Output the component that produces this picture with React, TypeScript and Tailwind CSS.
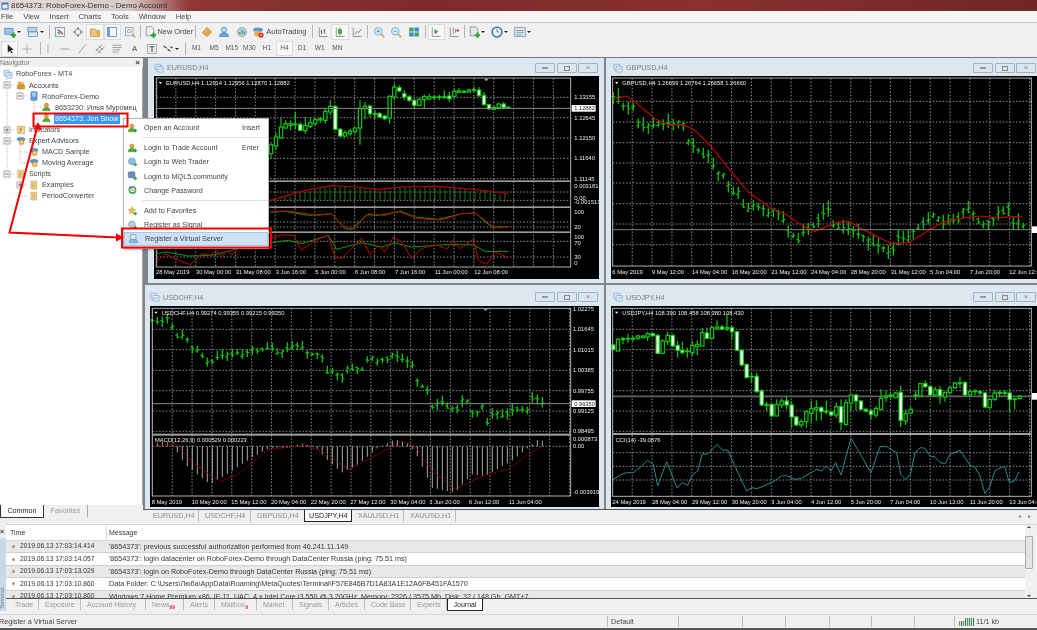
import React from "react";

type P = [number, number];

function rng(seed: number) {
  let s = seed;
  return () => {
    s = (s * 16807) % 2147483647;
    return (s % 10000) / 10000;
  };
}
function interp(pts: P[], x: number) {
  if (x <= pts[0][0]) return pts[0][1];
  for (let i = 1; i < pts.length; i++) {
    if (x <= pts[i][0]) {
      const [a, b] = pts[i - 1];
      const [c, d] = pts[i];
      return b + ((d - b) * (x - a)) / (c - a);
    }
  }
  return pts[pts.length - 1][1];
}
const poly = (pts: P[]) => pts.map((p) => p.join(",")).join(" ");

function Grid({ x0, x1, y0, y1, vx, hy }: { x0: number; x1: number; y0: number; y1: number; vx: number; hy: number[] }) {
  const vs: number[] = [];
  for (let x = vx; x < x1; x += 59.6) vs.push(x);
  return (
    <g stroke="#a4a4a4" strokeWidth={2.4} strokeDasharray="5 5">
      {vs.map((x) => (
        <line key={x} x1={x} x2={x} y1={y0} y2={y1} />
      ))}
      {hy.map((y) => (
        <line key={y} x1={x0} x2={x1} y1={y} y2={y} />
      ))}
    </g>
  );
}
function Frame({ x0, x1, y0, y1 }: { x0: number; x1: number; y0: number; y1: number }) {
  return <rect x={x0} y={y0} width={x1 - x0} height={y1 - y0} fill="none" stroke="#b0b0b0" strokeWidth={3} />;
}
function T({ x, y, t, fill = "#ececec" }: { x: number; y: number; t: string; fill?: string }) {
  return (
    <text x={x} y={y} fontSize={17.4} fill={fill}>
      {t}
    </text>
  );
}
function Dates({ y, items }: { y: number; items: [number, string][] }) {
  return (
    <>
      {items.map(([x, t]) => (
        <T key={x} x={x} y={y} t={t} />
      ))}
    </>
  );
}
function Axis({ x, items }: { x: number; items: [number, string][] }) {
  return (
    <>
      {items.map(([y, t]) => (
        <T key={y + t} x={x} y={y + 6} t={t} />
      ))}
    </>
  );
}
function Cur({ x, y, t, w = 72 }: { x: number; y: number; t?: string; w?: number }) {
  return (
    <g>
      <rect x={x} y={y - 10} width={w} height={20} fill="#ffffff" />
      {t && (
        <text x={x + 8} y={y + 6} fontSize={17} fill="#222">
          {t}
        </text>
      )}
    </g>
  );
}
function Tri({ x, y }: { x: number; y: number }) {
  return <polygon points={`${x},${y} ${x + 10},${y} ${x + 5},${y + 6}`} fill="#ffffff" />;
}
type Cd = [number, number, number, number, number, number];
function Candles({ data }: { data: Cd[] }) {
  return (
    <g strokeWidth={3.4} stroke="#10d010">
      {data.map(([x, t, b, h, l, w]) => (
        <g key={x}>
          <line x1={x} x2={x} y1={h} y2={l} />
          <rect x={x - 5} y={t} width={10} height={Math.max(b - t, 2)} fill={w ? "#ffffff" : "#000000"} />
        </g>
      ))}
    </g>
  );
}
function Bars({ pts, x0, x1, seed, size }: { pts: P[]; x0: number; x1: number; seed: number; size: number }) {
  const r = rng(seed);
  const out: React.ReactNode[] = [];
  for (let x = x0; x <= x1; x += 15) {
    const c = interp(pts, x);
    const up = size * (0.3 + r());
    const dn = size * (0.3 + r());
    const o = c + (r() - 0.5) * size * 0.7;
    const cl = c + (r() - 0.5) * size * 0.7;
    out.push(
      <g key={x}>
        <line x1={x} x2={x} y1={c - up} y2={c + dn} />
        <line x1={x - 6} x2={x} y1={o} y2={o} />
        <line x1={x} x2={x + 6} y1={cl} y2={cl} />
      </g>
    );
  }
  return (
    <g stroke="#10b810" strokeWidth={4}>
      {out}
    </g>
  );
}
function Line({ pts, c, w = 3, dash }: { pts: P[]; c: string; w?: number; dash?: string }) {
  return <polyline points={poly(pts)} fill="none" stroke={c} strokeWidth={w} strokeDasharray={dash} strokeLinejoin="round" />;
}

const eurC: Cd[] = [
  [378,258,285,250,298,0],[393,235,262,222,275,0],[408,205,238,178,240,0],[422,195,208,185,210,0],[437,195,200,185,215,0],[451,196,198,160,212,0],[466,197,215,190,218,1],[481,200,216,175,225,0],[496,192,203,175,208,0],[511,183,195,178,198,0],[526,180,184,175,192,0],[541,158,185,150,195,0],[556,143,160,125,170,0],[571,143,212,140,215,1],[586,212,232,208,235,1],[600,222,232,215,235,0],[615,217,225,210,232,0],[630,208,218,205,225,0],[645,150,208,125,258,0],[660,143,150,130,180,0],[675,142,165,138,175,1],[690,165,167,155,180,0],[704,165,175,160,178,1],[719,172,180,168,185,1],[734,113,178,110,195,0],[748,85,115,75,125,0],[763,87,97,80,100,1],[778,105,115,95,125,1],[793,114,125,108,130,1],[808,125,140,120,150,1],[823,122,140,118,142,0],[838,113,123,108,148,0],[853,114,121,105,125,0],[868,115,117,110,125,0],[883,114,116,108,125,0],[898,114,117,95,120,0],[913,112,120,100,130,1],[928,98,113,92,116,0],[942,96,101,88,104,0],[957,98,101,94,104,0],[972,94,100,90,102,0],[987,93,94,85,100,0],[1002,94,110,85,115,1],[1017,110,138,100,140,1],[1032,138,150,135,155,1],[1047,146,152,142,155,0],[1061,136,147,132,153,0],[1076,136,146,130,152,1],[1090,146,148,142,150,0],
];
const jpyC: Cd[] = [
  [25,182,196,178,198,1],[39,165,200,160,200,0],[54,163,166,158,180,0],[69,162,164,148,175,0],[84,162,164,155,172,0],[99,155,162,152,166,0],[114,155,160,153,162,0],[128,148,158,142,170,0],[143,148,154,146,158,1],[158,153,207,150,208,1],[173,170,207,165,210,0],[188,153,172,142,182,0],[203,153,185,150,188,1],[218,183,198,170,220,1],[232,198,205,172,210,1],[247,200,202,190,220,0],[262,183,205,170,215,0],[277,180,187,168,213,0],[292,145,185,130,186,0],[306,146,162,130,165,1],[321,130,162,125,165,0],[336,128,134,108,138,0],[351,128,134,122,138,1],[366,130,134,90,140,0],[381,130,142,125,165,1],[396,142,198,140,200,1],[410,198,242,195,245,1],[425,240,280,238,282,1],[440,276,278,265,295,0],[455,276,322,265,325,1],[470,320,362,315,365,1],[485,360,363,352,380,0],[500,360,395,358,397,1],[515,360,395,345,395,0],[530,350,362,342,372,0],[545,350,362,335,375,1],[560,362,398,350,430,1],[574,398,422,395,425,1],[589,412,422,405,430,0],[604,382,412,378,430,0],[619,373,387,350,415,0],[634,370,376,348,410,0],[649,370,382,365,408,1],[664,380,383,350,390,0],[679,383,392,380,396,1],[694,367,392,355,400,0],[708,367,414,345,438,1],[723,355,420,345,425,0],[738,332,356,328,380,0],[753,332,350,330,378,1],[768,350,375,348,378,1],[783,375,380,372,385,1],[798,380,390,375,405,1],[813,373,392,365,400,0],[828,342,375,315,378,0],[843,335,340,318,352,0],[857,332,335,325,345,0],[872,326,340,322,342,0],[887,324,408,305,428,1],[902,388,410,375,422,0],[917,375,386,368,388,0],[932,332,333,320,348,0],[946,298,335,296,336,0],[961,298,307,288,312,1],[976,307,332,303,335,1],[991,316,332,308,336,0],[1005,316,334,305,358,1],[1020,325,338,320,352,0],[1035,310,325,306,330,0],[1050,296,310,292,314,0],[1065,295,297,278,312,0],[1080,295,332,290,335,1],[1095,322,332,318,338,0],[1110,320,322,314,334,0],[1125,322,326,318,332,1],[1140,326,368,322,372,1],[1154,345,370,342,372,0],[1169,326,345,318,350,0],[1184,324,327,320,338,0],[1199,324,327,318,334,0],[1214,326,346,320,385,1],[1229,343,345,340,375,0],[1244,336,343,332,346,0],
];

function Eur() {
  const hist: number[] = [];
  for (let x = 375; x <= 1090; x += 15) hist.push(x);
  const ma: P[] = [[375,425],[430,410],[480,395],[560,381],[630,385],[700,392],[770,385],[870,383],[960,390],[1030,397],[1090,405]];
  const r = rng(91);
  return (
    <svg width={445} height={203.4} viewBox="27 52 1335 610" className="block shrink-0 bg-black">
      <Grid x0={35} x1={1277} y0={58} y1={625} vx={33} hy={[116,177,238,299,360,400,425,490,505,548,595]} />
      <Candles data={eurC} />
      <g stroke="#0e7d0e" strokeWidth={3}>
        {hist.map((x) => (
          <line key={x} x1={x} x2={x} y1={interp(ma, x) + (r() - 0.6) * 8 + 4} y2={425} />
        ))}
      </g>
      <Line pts={ma} c="#b40000" w={3.5} />
      <Line pts={[[375,460],[420,458],[490,470],[560,465],[600,510],[620,512],[665,468],[700,470],[770,458],[810,475],[880,482],[950,465],[990,463],[1040,505],[1090,505]]} c="#0e9a0e" />
      <Line pts={[[375,458],[430,457],[520,470],[560,465],[590,500],[625,512],[670,465],[720,470],[760,458],[820,480],[890,484],[950,465],[990,463],[1040,500],[1060,508],[1090,505]]} c="#c00000" />
      <Line pts={[[35,585],[65,580],[130,592],[200,590],[280,570],[350,555],[430,545],[470,555],[550,530],[575,572],[650,552],[710,565],[750,553],[800,565],[900,558],[985,558],[1020,578],[1090,578]]} c="#0e9a0e" />
      <Line pts={[[35,610],[60,585],[90,600],[135,618],[170,585],[195,590],[215,575],[230,595],[245,575],[260,590],[280,570],[340,570],[370,540],[420,528],[445,530],[470,575],[510,545],[550,530],[570,595],[590,600],[630,560],[650,538],[675,588],[700,560],[720,580],[745,535],[770,550],[800,598],[830,570],[855,562],[880,560],[905,572],[925,545],[945,570],[985,542],[1000,605],[1025,617],[1050,580],[1090,597]]} c="#c00000" />
      <Frame x0={35} x1={1277} y0={58} y1={625} />
      {[367, 445, 520].map((y) => (
        <rect key={y} x={35} y={y - 2} width={1242} height={5} fill="#9a9a9a" />
      ))}
      <line x1={35} x2={1277} y1={149} y2={149} stroke="#8c8c8c" strokeWidth={3} />
      <polygon points="1017,60 1031,60 1024,68" fill="#9aa3ad" />
      <Tri x={41} y={70} />
      <T x={63} y={79} t="EURUSD,H4  1.12914 1.12956 1.12870 1.12882" />
      <Axis x={1288} items={[[116,"1.13155"],[177,"1.12645"],[238,"1.12150"],[299,"1.11640"],[360,"1.11145"],[382,"0.003181"],[419,"0.00"],[431,"-0.001513"],[461,"100"],[505,"20"],[535,"100"],[553,"70"],[595,"30"],[612,"0"]]} />
      <Cur x={1280} y={149} t="1.12882" />
      <Dates y={646} items={[[33,"28 May 2019"],[153,"30 May 00:00"],[272,"31 May 08:00"],[392,"3 Jun 16:00"],[511,"5 Jun 00:00"],[630,"6 Jun 08:00"],[750,"7 Jun 16:00"],[869,"11 Jun 00:00"],[988,"12 Jun 08:00"]]} />
    </svg>
  );
}
function Gbp() {
  return (
    <svg width={426} height={203.4} viewBox="18 52 1278 610" className="block shrink-0 bg-black">
      <Grid x0={23} x1={1279} y0={58} y1={622} vx={22} hy={[128,190,252,313,373,435,496,558]} />
      <Bars seed={77} x0={25} x1={1258} size={20} pts={[[25,115],[40,110],[60,150],[85,145],[100,195],[130,205],[150,195],[195,190],[235,195],[245,250],[270,260],[290,290],[320,290],[330,345],[360,350],[375,395],[405,405],[420,460],[450,440],[480,455],[495,470],[510,450],[530,470],[550,520],[580,540],[600,510],[630,500],[650,465],[670,450],[685,500],[720,510],[760,520],[790,550],[830,565],[858,585],[880,535],[910,540],[945,500],[990,465],[1010,495],[1040,480],[1060,480],[1085,440],[1105,470],[1130,495],[1160,490],[1180,465],[1210,450],[1225,490],[1250,490],[1258,510]]} />
      <Line c="#c00000" w={3.5} pts={[[25,120],[65,112],[90,130],[150,180],[190,198],[235,198],[270,215],[320,265],[380,340],[430,400],[500,450],[540,465],[590,500],[630,518],[690,492],[730,488],[780,515],[860,555],[910,552],[960,522],[1010,492],[1050,482],[1120,472],[1180,477],[1250,473]]} />
      <line x1={23} x2={1279} y1={513} y2={513} stroke="#808080" strokeWidth={3} />
      <Frame x0={23} x1={1279} y0={58} y1={622} />
      <Tri x={30} y={70} />
      <T x={52} y={79} t="GBPUSD,H4  1.26699 1.26764 1.26658 1.26660" />
      <Cur x={1281} y={513} />
      <Dates y={646} items={[[22,"6 May 2019"],[141,"9 May 12:00"],[261,"14 May 04:00"],[380,"16 May 20:00"],[499,"21 May 12:00"],[618,"24 May 04:00"],[737,"28 May 20:00"],[857,"31 May 12:00"],[975,"5 Jun 04:00"],[1094,"7 Jun 20:00"],[1213,"12 Jun 12:00"]]} />
    </svg>
  );
}
function Chf() {
  const hx: number[] = [];
  for (let x = 22; x <= 1195; x += 15) hx.push(x);
  const h: P[] = [[22,480],[60,470],[85,485],[120,540],[195,600],[260,560],[320,520],[375,490],[430,490],[470,478],[510,486],[540,520],[590,565],[640,540],[700,490],[750,465],[790,478],[820,520],[860,610],[930,625],[980,570],[1020,575],[1100,530],[1150,490],[1180,465],[1195,470]];
  return (
    <svg width={449} height={201} viewBox="15 65 1347 603" className="block shrink-0 bg-black">
      <Grid x0={22} x1={1277} y0={72} y1={635} vx={22} hy={[135,196,258,319,380,441,486]} />
      <Bars seed={313} x0={22} x1={1195} size={15} pts={[[22,110],[40,118],[75,100],[90,155],[120,155],[135,185],[165,200],[180,235],[205,230],[225,210],[255,215],[270,205],[300,215],[315,195],[345,198],[380,185],[400,210],[430,190],[470,185],[490,210],[530,210],[540,260],[570,265],[590,280],[610,250],[660,255],[670,215],[700,235],[750,210],[800,240],[815,290],[850,320],[855,375],[890,350],[915,375],[935,380],[945,350],[975,350],[985,400],[1015,360],[1025,420],[1045,385],[1075,395],[1110,370],[1150,380],[1160,340],[1190,345],[1195,370]]} />
      <g stroke="#a8a8a8" strokeWidth={3}>
        {hx.map((x) => (
          <line key={x} x1={x} x2={x} y1={486} y2={interp(h, x)} />
        ))}
      </g>
      <Line c="#c00000" w={3} dash="5 4" pts={[[22,486],[90,478],[150,540],[225,592],[280,570],[370,495],[480,484],[540,505],[610,556],[680,520],[770,470],[810,485],[860,560],[930,615],[1020,572],[1090,555],[1150,510],[1195,485]]} />
      <line x1={22} x2={1277} y1={358} y2={358} stroke="#8c8c8c" strokeWidth={3} />
      <Frame x0={22} x1={1277} y0={72} y1={635} />
      <rect x={22} y={448} width={1255} height={6} fill="#a0a0a0" />
      <polygon points="1015,73 1029,73 1022,80" fill="#9aa3ad" />
      <Tri x={28} y={82} />
      <T x={50} y={91} t="USDCHF,H4  0.99274 0.99355 0.99215 0.99350" />
      <T x={30} y={472} t="MACD(12,26,9) 0.000529 0.000223" />
      <Axis x={1284} items={[[73,"1.02275"],[135,"1.01645"],[196,"1.01015"],[258,"1.00385"],[319,"0.99755"],[381,"0.99125"],[441,"0.98495"],[464,"0.000873"],[486,"0.00"],[623,"-0.003919"]]} />
      <Cur x={1280} y={358} t="0.99350" />
      <Dates y={658} items={[[20,"8 May 2019"],[140,"10 May 20:00"],[259,"15 May 12:00"],[378,"20 May 04:00"],[497,"22 May 20:00"],[616,"27 May 12:00"],[736,"30 May 04:00"],[853,"3 Jun 20:00"],[972,"6 Jun 12:00"],[1091,"11 Jun 04:00"]]} />
    </svg>
  );
}
function Jpy() {
  return (
    <svg width={426} height={201} viewBox="18 65 1278 603" className="block shrink-0 bg-black">
      <Grid x0={23} x1={1279} y0={72} y1={635} vx={22} hy={[135,196,258,319,380,441,505,546,587]} />
      <line x1={23} x2={1279} y1={336} y2={336} stroke="#606060" strokeWidth={5} />
      <Candles data={jpyC} />
      <Line c="#2a8a8c" w={3} pts={[[25,585],[50,570],[65,565],[85,565],[110,545],[128,528],[145,540],[158,605],[185,532],[216,610],[232,595],[248,603],[262,572],[278,560],[292,508],[308,510],[336,480],[352,497],[368,497],[392,550],[425,620],[440,610],[456,613],[500,595],[530,575],[545,574],[570,585],[590,582],[635,555],[650,560],[665,545],[678,560],[692,535],[708,572],[738,462],[798,565],[825,487],[845,487],[875,505],[887,570],[902,585],[916,570],[930,505],[946,490],[960,492],[976,515],[990,518],[1005,535],[1020,538],[1035,510],[1065,498],[1095,543],[1110,548],[1125,575],[1140,628],[1155,605],[1170,558],[1199,546],[1213,595],[1228,590],[1242,562]]} />
      <Frame x0={23} x1={1279} y0={72} y1={636} />
      <rect x={23} y={446} width={1256} height={6} fill="#a0a0a0" />
      <Tri x={30} y={82} />
      <T x={52} y={91} t="USDJPY,H4  108.390 108.458 108.380 108.430" />
      <T x={32} y={472} t="CCI(14) -39.0876" />
      <Cur x={1281} y={336} />
      <Dates y={658} items={[[22,"24 May 2019"],[141,"28 May 04:00"],[261,"29 May 12:00"],[380,"30 May 20:00"],[499,"3 Jun 04:00"],[618,"4 Jun 12:00"],[737,"5 Jun 20:00"],[855,"7 Jun 04:00"],[975,"10 Jun 12:00"],[1094,"11 Jun 20:00"],[1213,"13 Jun 04:00"]]} />
    </svg>
  );
}

const S = ({ c, children }: { c: string; children: React.ReactNode }) => (
  <svg viewBox="0 0 16 16" className={c}>
    {children}
  </svg>
);
const Person = ({ bg = "#e8a53a", arrow = true }: { bg?: string; arrow?: boolean }) => (
  <>
    <circle cx="7" cy="5" r="3.4" fill={bg} stroke="#8d6a1e" strokeWidth=".6" />
    <path d="M1 14c0-4 3-5.5 6-5.5s6 1.5 6 5.5z" fill="#5aa832" stroke="#3c7a1f" strokeWidth=".6" />
    {arrow && <path d="M9 11h3V8.500l3.500 3.500-3.500 3.500V13H9z" fill="#29a82e" />}
  </>
);
const ChartWin = () => (
  <>
    <rect x="1.5" y="2" width="9" height="9" rx="1" fill="#dce9f6" stroke="#6c9ac8" />
    <rect x="5" y="5.5" width="9.5" height="9" rx="1" fill="#e8f1fa" stroke="#6c9ac8" />
    <path d="M7 12l2-3 2 1.500 2-3" fill="none" stroke="#6c9ac8" />
  </>
);
const Scroll = () => (
  <>
    <path d="M3 2h9l1 2-1 1v8l1 1.500H4l-1-1.500V5L2 4z" fill="#eed28e" stroke="#b8933f" strokeWidth=".8" />
    <path d="M5 6h5M5 8.500h5M5 11h4" stroke="#b8933f" strokeWidth=".8" />
  </>
);
const Gear = () => (
  <>
    <ellipse cx="8" cy="5" rx="6.500" ry="3" fill="#5a97d6" stroke="#2f6cab" strokeWidth=".6" />
    <circle cx="9" cy="10" r="4" fill="#e9b23f" stroke="#a37a1f" strokeWidth=".6" />
    <circle cx="9" cy="10" r="1.500" fill="#fff4cf" />
  </>
);

function Nav() {
  const rows: { l: number; t: string; i: React.ReactNode; sel?: boolean }[] = [
    { l: 0, t: "RoboForex - MT4", i: <ChartWin /> },
    { l: 1, t: "Accounts", i: <><circle cx="6" cy="5" r="3" fill="#e8a53a"/><circle cx="10.500" cy="6" r="3" fill="#f0b84d"/><rect x="2" y="8" width="12" height="6.500" rx="1.500" fill="#d49a30" stroke="#8d6a1e" strokeWidth=".6"/></> },
    { l: 2, t: "RoboForex-Demo", i: <><rect x="3" y="1" width="10" height="14" rx="1.500" fill="#5b9ee0" stroke="#2f6cab" strokeWidth=".7"/><rect x="5" y="3" width="6" height="2.500" fill="#d7e9fa"/><rect x="5" y="7" width="6" height="1.500" fill="#d7e9fa"/></> },
    { l: 3, t: "8653230: Илья Муромец", i: <Person arrow={false} /> },
    { l: 3, t: "8654373: Jon Snow", i: <Person arrow={false} />, sel: true },
    { l: 1, t: "Indicators", i: <><rect x="2" y="2" width="12" height="12" rx="1.500" fill="#f1d596" stroke="#b38e3e" strokeWidth=".8"/><path d="M9.500 4.500c-2 0-1.500 2-2 4s-.5 3-2.500 3M6 7.500h3.500" fill="none" stroke="#8a5c10" strokeWidth="1"/></> },
    { l: 1, t: "Expert Advisors", i: <Gear /> },
    { l: 2, t: "MACD Sample", i: <Gear /> },
    { l: 2, t: "Moving Average", i: <Gear /> },
    { l: 1, t: "Scripts", i: <Scroll /> },
    { l: 2, t: "Examples", i: <Scroll /> },
    { l: 2, t: "PeriodConverter", i: <Scroll /> },
  ];
  const pad = ["pl-[3px]", "pl-[16px]", "pl-[29px]", "pl-[42px]"];
  const box = (x: number, y: number, plus: boolean) => (
    <g key={x + "-" + y}>
      <rect x={x - 3} y={y - 3} width={6} height={6} fill="#f4f4f4" stroke="#9a9a9a" strokeWidth=".8" />
      <path d={plus ? `M${x - 1.8} ${y}h3.600M${x} ${y - 1.800}v3.600` : `M${x - 1.8} ${y}h3.600`} stroke="#555" strokeWidth=".8" />
    </g>
  );
  return (
    <div className="flex h-full w-[143px] shrink-0 flex-col bg-[#f0f0f0]">
      <div className="flex h-[9px] shrink-0 items-center justify-between pr-[3px] text-[7px] leading-none text-[#777]">
        <span>Navigator</span>
        <span className="text-[8px] font-bold text-[#333]">×</span>
      </div>
      <div className="relative flex-1 overflow-hidden border-r border-[#a8a8a8] bg-white pt-[1.500px]">
        <svg className="absolute left-0 top-0" width="60" height="140">
          <g stroke="#aaa" strokeWidth=".8" strokeDasharray="1 1" fill="none">
            <path d="M7 12V108M7 18H15M7 63H15M7 74H15M7 107H15" />
            <path d="M20 22V29M20 29H28M20 78V96M20 85H28M20 96H28M20 112V129M20 118H28M20 129H28" />
            <path d="M34 34V52M34 40H42M34 52H42" />
          </g>
          {box(7, 18, false)}
          {box(20, 29, false)}
          {box(7, 63, true)}
          {box(7, 74, false)}
          {box(7, 107, false)}
          {box(20, 118, true)}
        </svg>
        {rows.map((r) => (
          <div key={r.t} className={`relative flex h-[11.100px] items-center gap-[3px] ${pad[r.l]} text-[7.200px] leading-none text-[#444]`}>
            <S c="h-[10px] w-[10px] shrink-0">{r.i}</S>
            {r.sel ? <span className="-ml-[1px] bg-[#3399ff] px-[1px] py-[1.500px] text-white">{r.t}</span> : <span className="whitespace-nowrap">{r.t}</span>}
          </div>
        ))}
      </div>
      <div className="flex h-[19px] shrink-0 items-start text-[7.200px] leading-none">
        <div className="flex h-[13px] w-[44px] items-center justify-center border-x border-b border-[#333] bg-white text-[#222]">Common</div>
        <div className="flex h-[12px] w-[44px] items-center justify-center border-r border-[#aaa] text-[#999]">Favorites</div>
      </div>
    </div>
  );
}

function WinBtns() {
  return (
    <div className="flex gap-[1.500px]">
      <div className="flex h-[10px] w-[20px] items-center justify-center rounded-[1px] border border-[#9fb2c6] bg-[#dbe6f0]">
        <div className="h-[2px] w-[6px] border border-[#999] bg-white" />
      </div>
      <div className="flex h-[10px] w-[20px] items-center justify-center rounded-[1px] border border-[#9fb2c6] bg-[#dbe6f0]">
        <div className="h-[5px] w-[6px] border border-[#888]" />
      </div>
      <div className="flex h-[10px] w-[20px] items-center justify-center rounded-[1px] border border-[#9fb2c6] bg-[#dbe6f0] text-[8px] leading-none text-[#888]">×</div>
    </div>
  );
}
function Win({ title, cls, head, children }: { title: string; cls: string; head: string; children: React.ReactNode }) {
  return (
    <div className={`flex flex-col overflow-hidden bg-[#dce7f0] ${cls}`}>
      <div className={`flex shrink-0 items-center justify-between pr-[1px] text-[7.200px] leading-none text-[#77818c] ${head}`}>
        <div className="flex items-center gap-[3px]">
          <S c="h-[10px] w-[10px]"><ChartWin /></S>
          <span>{title}</span>
        </div>
        <WinBtns />
      </div>
      {children}
    </div>
  );
}

const Arrow = () => <span className="ml-[1px] inline-block h-0 w-0 border-x-[2px] border-t-[2.500px] border-x-transparent border-t-[#222]" />;
const Sep = () => <div className="mx-[2px] h-[13px] w-[1px] shrink-0 bg-[#b4b4b4]" />;
const Btn = ({ c = "w-[17.400px]", on, children }: { c?: string; on?: boolean; children: React.ReactNode }) => (
  <div className={`flex h-[16px] shrink-0 items-center justify-center ${c} ${on ? "border border-[#dcdcdc] bg-[#f9f9f9]" : ""}`}>{children}</div>
);
const I = ({ children }: { children: React.ReactNode }) => <S c="h-[12px] w-[12px] shrink-0">{children}</S>;
const Plus = () => <path d="M9 11h2.500V8.500h2.500V11h2v2.500h-2V16h-2.500v-2.500H9z" fill="#1fa528" />;
const grn = "#2f8f2f";

function Toolbar1() {
  return (
    <div className="flex h-[17px] items-center pl-[3px] text-[7.400px] leading-none text-[#444]">
      <Btn c="w-[19px]"><I><rect x="1" y="3" width="11" height="8" fill="#9cc3e6" stroke="#4f86bb"/><Plus /></I><Arrow /></Btn>
      <Btn c="w-[3px]"><span /></Btn>
      <Btn c="w-[20px]"><I><rect x="1" y="2" width="12" height="5" fill="#bcd6ee" stroke="#5c8dbd"/><rect x="2" y="8" width="12" height="6" fill="#dfe9f3" stroke="#5c8dbd"/></I><Arrow /></Btn>
      <Btn c="w-[1.500px]"><span /></Btn>
      <Sep />
      <Btn><I><rect x="2" y="2" width="12" height="12" fill="#eaf2fa" stroke="#5c8dbd"/><path d="M5 5l4 3 3 3" stroke="#d93b2b" strokeWidth="1.500"/><path d="M5 8l3 3" stroke={grn} strokeWidth="1.500"/></I></Btn>
      <Btn><I><circle cx="8" cy="8" r="4" fill="none" stroke="#777"/><path d="M8 1l2 3H6zM8 15l2-3H6zM1 8l3-2v4zM15 8l-3-2v4z" fill="#888"/></I></Btn>
      <Btn on><I><path d="M2 4h6l1 2h5v8H2z" fill="#f2c877" stroke="#b98f3f"/><path d="M10 5l1.500 3 3 .5-2 2 .5 3-3-1.500z" fill="#e9b23f"/></I></Btn>
      <Btn on><I><rect x="2" y="2" width="12" height="12" fill="#fff" stroke="#3c7fbe"/><rect x="2" y="2" width="3.500" height="12" fill="#6aa5dc"/></I></Btn>
      <Btn><I><rect x="2" y="2" width="10" height="11" fill="#eef3f8" stroke="#8aa0b6"/><circle cx="7" cy="7" r="2.500" fill="none" stroke="#7c8fa3"/><path d="M11 11l4 4" stroke="#c8922e" strokeWidth="1.500"/></I></Btn>
      <Sep />
      <Btn c="w-[13px]"><I><path d="M3 1h7l3 3v9H3z" fill="#eef1f4" stroke="#7b8794"/><Plus /></I></Btn>
      <span className="ml-[1px] whitespace-nowrap">New Order</span>
      <Sep />
      <Btn><I><path d="M2 9l6-7 6 6-6 6z" fill="#e8a53a" stroke="#8d6a1e" strokeWidth=".7"/><path d="M4 9l4-4" stroke="#f9e0a8"/></I></Btn>
      <Btn><I><circle cx="8" cy="5" r="3.500" fill="#bcd6ee" stroke="#4f86bb"/><path d="M2 14c0-4 3-5 6-5s6 1 6 5z" fill="#6aa5dc" stroke="#3c7fbe"/></I></Btn>
      <Btn><I><circle cx="8" cy="8" r="6" fill="#b9d2df" stroke="#7aa1b5"/><path d="M5 11V8M8 11V5M11 11V7" stroke={grn} strokeWidth="1.300"/></I></Btn>
      <Btn c="w-[15px]"><I><ellipse cx="8" cy="5" rx="6.500" ry="3" fill="#5a97d6"/><circle cx="7" cy="10" r="4" fill="#e9b23f"/><circle cx="12" cy="12" r="3.500" fill="#d92b2b"/><rect x="10.500" y="11.300" width="3" height="1.400" fill="#fff"/></I></Btn>
      <span className="ml-[1px] mr-[4px] whitespace-nowrap">AutoTrading</span>
      <Sep />
      <Btn c="w-[16px]"><I><path d="M3 2v12h11" fill="none" stroke="#777"/><path d="M6 5v6M5 7h1M6 9h1M10 4v6M9 6h1M10 8h1" stroke={grn} strokeWidth="1.200"/></I></Btn>
      <Btn c="w-[18px]" on><I><path d="M3 2v12h11" fill="none" stroke="#777"/><path d="M8 2v11" stroke={grn}/><rect x="6" y="5" width="4" height="5" fill="#4ab04a" stroke={grn}/></I></Btn>
      <Btn c="w-[16px]"><I><path d="M3 2v12h11" fill="none" stroke="#777"/><path d="M5 11l3-4 2 2 4-5" fill="none" stroke={grn}/></I></Btn>
      <Sep />
      <Btn><I><circle cx="7" cy="7" r="5" fill="#d9ecfa" stroke="#4f9fd6"/><path d="M5 7h4M7 5v4" stroke="#3c7fbe"/><path d="M11 11l4 4" stroke="#d19a33" strokeWidth="2"/></I></Btn>
      <Btn><I><circle cx="7" cy="7" r="5" fill="#d9ecfa" stroke="#4f9fd6"/><path d="M5 7h4" stroke="#3c7fbe"/><path d="M11 11l4 4" stroke="#d19a33" strokeWidth="2"/></I></Btn>
      <Btn><I><rect x="1.500" y="2" width="6" height="5.500" fill="#3fa85a"/><rect x="8.500" y="2" width="6" height="5.500" fill="#3f8fd0"/><rect x="1.500" y="8.500" width="6" height="5.500" fill="#3f8fd0"/><rect x="8.500" y="8.500" width="6" height="5.500" fill="#3fa85a"/></I></Btn>
      <Sep />
      <Btn on><I><path d="M3 2v12h11" fill="none" stroke="#777"/><path d="M6 4l5 3.500L6 11z" fill="#2ca02c"/></I></Btn>
      <Btn><I><path d="M3 2v12h11" fill="none" stroke="#777"/><path d="M7 2v9M10 4v5" stroke="#777"/><path d="M11 6h4M13 4v4" stroke="#c83232" strokeWidth="1.200"/></I></Btn>
      <Sep />
      <Btn c="w-[18px]"><I><path d="M3 1h7l3 3v9H3z" fill="#dfe5ec" stroke="#7b8794"/><Plus /></I><Arrow /></Btn>
      <Btn c="w-[5px]"><span /></Btn>
      <Btn c="w-[18px]"><I><circle cx="8" cy="8" r="6.500" fill="#fff" stroke="#2c6fbf" strokeWidth="2"/><path d="M8 4v4h3" fill="none" stroke="#2c6fbf" strokeWidth="1.200"/></I><Arrow /></Btn>
      <Btn c="w-[5px]"><span /></Btn>
      <Btn c="w-[18px]"><I><rect x="1" y="2" width="14" height="12" fill="#dbe7f3" stroke="#6c93b8"/><path d="M3 6h10" stroke="#d04a3a"/><path d="M3 9h10" stroke="#3fa85a"/><path d="M3 12h7" stroke="#6c93b8"/></I><Arrow /></Btn>
    </div>
  );
}
function Toolbar2() {
  const tf = ["M1", "M5", "M15", "M30", "H1", "H4", "D1", "W1", "MN"];
  return (
    <div className="flex h-[17px] items-center pl-[1px] text-[6.500px] leading-none text-[#555]">
      <Btn c="w-[17px]" on><I><path d="M5 2v11l3-3 2 4 1.500-.7-2-4H13z" fill="#222"/></I></Btn>
      <Btn><I><path d="M8 2v12M2 8h12" stroke="#999"/></I></Btn>
      <Btn c="w-[3px]"><span /></Btn>
      <Sep />
      <Btn c="w-[10px]"><I><path d="M8 2v12" stroke="#999"/></I></Btn>
      <Btn c="w-[3px]"><span /></Btn>
      <Btn><I><path d="M2 8h12" stroke="#888"/></I></Btn>
      <Btn><I><path d="M3 14L13 2" stroke="#888"/></I></Btn>
      <Btn><I><path d="M2 11L11 2M5 14L14 5M3 8l6 5M6 4l6 5" stroke="#777"/></I></Btn>
      <Btn><I><path d="M2 3h12M2 6h12M2 9h10M2 12h8" stroke="#888"/></I></Btn>
      <Btn><span className="text-[8px] font-bold text-[#777]">A</span></Btn>
      <Btn><I><rect x="2" y="2" width="12" height="12" fill="#e8e8e8" stroke="#999"/><path d="M5 5h6M8 5v7" stroke="#555" strokeWidth="1.300"/></I></Btn>
      <Btn c="w-[19px]"><I><path d="M2 4l4 2-1 1zM7 8l4 2-1 1zM11 5l3 1-1 1z" fill="#444" stroke="#444"/></I><Arrow /></Btn>
      <div className="ml-[5px] mr-[2px] h-[13px] w-[1px] bg-[#b4b4b4]" />
      {tf.map((t) => (
        <div key={t} className={`flex h-[15px] w-[17.600px] items-center justify-center ${t === "H4" ? "border border-[#dcdcdc] bg-[#f9f9f9]" : ""}`}>
          {t}
        </div>
      ))}
    </div>
  );
}

function Menu() {
  const Row = ({ t, k, i, hi }: { t: string; k?: string; i: React.ReactNode; hi?: boolean }) => (
    <div className={`flex h-[14.200px] items-center pl-[3px] pr-[8px] ${hi ? "border border-[#a8c8e8] bg-[#cfe2f5]" : ""}`}>
      <S c="h-[10px] w-[11px] shrink-0">{i}</S>
      <span className="ml-[6px] flex-1 whitespace-nowrap">{t}</span>
      {k && <span className="w-[18px]">{k}</span>}
    </div>
  );
  const Ln = () => <div className="my-[2.500px] ml-[18px] h-[1px] bg-[#e4e4e4]" />;
  const globe = (c: string) => (
    <>
      <circle cx="7" cy="7" r="5.500" fill={c} stroke="#4a7fa8" strokeWidth=".7" />
      <path d="M9 11h3V8.500l3.500 3.500-3.500 3.500V13H9z" fill="#29a82e" />
    </>
  );
  return (
    <div className="absolute left-[123px] top-[118px] w-[146px] border border-[#b5b5b5] bg-white py-[1.500px] text-[7.200px] leading-none text-[#444] shadow-[1px_1px_2px_rgba(0,0,0,0.3)]">
      <Row t="Open an Account" k="Insert" i={<Person />} />
      <Ln />
      <Row t="Login to Trade Account" k="Enter" i={<Person />} />
      <Row t="Login to Web Trader" i={globe("#8cc0e0")} />
      <Row t="Login to MQL5.community" i={<><rect x="1" y="1" width="11" height="10" rx="2" fill="#6f8fb5" stroke="#46688f" strokeWidth=".6"/><path d="M9 11h3V8.500l3.500 3.500-3.500 3.500V13H9z" fill="#29a82e"/></>} />
      <Row t="Change Password" i={<><circle cx="8" cy="8" r="5" fill="none" stroke="#3fa85a" strokeWidth="2.500"/><circle cx="8" cy="8" r="2" fill="#e9b23f"/><path d="M2 3h5v3H2z" fill="#4f86bb"/></>} />
      <Ln />
      <Row t="Add to Favorites" i={<><path d="M7 1l2 4 4 .5-3 3 1 4-4-2-4 2 1-4-3-3 4-.5z" fill="#e9c14f" stroke="#a9882c" strokeWidth=".6"/><path d="M9 11h3V8.500l3.500 3.500-3.500 3.500V13H9z" fill="#29a82e"/></>} />
      <Row t="Register as Signal" i={globe("#b7ccd6")} />
      <Row hi t="Register a Virtual Server" i={<><rect x="3" y="1" width="9" height="8" rx="1" fill="#dce9f6" stroke="#4f86bb"/><path d="M1 12c0-2 2-3 4-3h5c3 0 5 1 5 3v2H1z" fill="#8fb8e0" stroke="#4f86bb" strokeWidth=".7"/></>} />
    </div>
  );
}

function Terminal() {
  const rows: [string, string][] = [
    ["2019.06.13 17:03:14.414", "'8654373': previous successful authorization performed from 46.241.11.149"],
    ["2019.06.13 17:03:14.057", "'8654373': login datacenter on RoboForex-Demo through DataCenter Russia (ping: 75.51 ms)"],
    ["2019.06.13 17:03:13.029", "'8654373': login on RoboForex-Demo through DataCenter Russia (ping: 75.51 ms)"],
    ["2019.06.13 17:03:10.860", "Data Folder: C:\\Users\\Люба\\AppData\\Roaming\\MetaQuotes\\Terminal\\F57E846B7D1A83A1E12A6FB451FA1570"],
    ["2019.06.13 17:03:10.860", "Windows 7 Home Premium x86, IE 11, UAC, 4 x Intel Core i3  550 @ 3.20GHz, Memory: 2326 / 3575 Mb, Disk: 32 / 148 Gb, GMT+7"],
  ];
  const tabs: { t: string; w: string; sup?: string }[] = [
    { t: "Trade", w: "w-[30px]" },
    { t: "Exposure", w: "w-[42px]" },
    { t: "Account History", w: "w-[65px]" },
    { t: "News", w: "w-[38px]", sup: "99" },
    { t: "Alerts", w: "w-[31px]" },
    { t: "Mailbox", w: "w-[42px]", sup: "9" },
    { t: "Market", w: "w-[36px]" },
    { t: "Signals", w: "w-[36px]" },
    { t: "Articles", w: "w-[36px]" },
    { t: "Code Base", w: "w-[46px]" },
    { t: "Experts", w: "w-[36px]" },
  ];
  return (
    <div className="flex h-[87px] shrink-0 bg-[#f0f0f0]">
      <div className="flex w-[6px] shrink-0 flex-col">
        <div className="flex h-[14px] items-center text-[7px] font-bold leading-none text-[#333]">×</div>
        <div className="flex flex-1 items-end justify-center bg-[#c7d9ea] pb-[2px]">
          <span className="rotate-180 text-[5.500px] leading-none text-[#6b7f93] [writing-mode:vertical-rl]">Terminal</span>
        </div>
      </div>
      <div className="flex min-w-0 flex-1 flex-col">
        <div className="flex h-[74px] overflow-hidden border-t border-[#d4d4d4] pr-[4px]">
          <div className="min-w-0 flex-1 overflow-hidden bg-white text-[6.700px] leading-none text-[#333]">
            <div className="flex h-[16px] items-center border-b border-[#d6d6d6] text-[7px]">
              <div className="w-[101px] border-r border-[#d6d6d6] py-[3px] pl-[4px]">Time</div>
              <div className="pl-[2px]">Message</div>
            </div>
            {rows.map((r, i) => (
              <div key={r[0] + i} className={`flex h-[12.400px] items-center border-b border-[#cfcfcf] ${i % 2 === 0 ? "bg-[#e8e8e8]" : "bg-white"}`}>
                <div className="flex w-[101px] items-center">
                  <div className="ml-[6px] mr-[5px] h-[3px] w-[3px] rounded-full bg-[#999]" />
                  <span className="whitespace-nowrap">{r[0]}</span>
                </div>
                <span className="whitespace-nowrap pl-[2px] text-[7.200px]">{r[1]}</span>
              </div>
            ))}
          </div>
          <div className="flex w-[8px] shrink-0 flex-col items-center bg-[#f0f0f0] pt-[1px]">
            <div className="h-0 w-0 border-x-[2px] border-b-[2px] border-x-transparent border-b-[#444]" />
            <div className="mt-[8px] h-[33px] w-[8px] rounded-[1px] border border-[#aaa] bg-[#e4e4e4]" />
            <div className="mt-auto mb-[1px] h-0 w-0 border-x-[2px] border-t-[2px] border-x-transparent border-t-[#444]" />
          </div>
        </div>
        <div className="flex h-[13px] items-start border-t border-[#555] pl-[3px] text-[7px] leading-none text-[#999]">
          {tabs.map((t) => (
            <div key={t.t} className={`flex h-[11px] shrink-0 items-center border-r border-[#bbb] pl-[6px] ${t.w}`}>
              {t.t}
              {t.sup && <span className="mt-[5px] text-[5px] font-bold text-[#d33]">{t.sup}</span>}
            </div>
          ))}
          <div className="flex h-[12px] w-[36px] shrink-0 items-center justify-center border-x border-b border-[#222] bg-white font-medium text-[#222]">Journal</div>
        </div>
      </div>
    </div>
  );
}

export default function App() {
  const chartTabs = [
    { t: "EURUSD,H4", c: "w-[52px] border-r border-[#bbb] pl-[6px] text-[#888]" },
    { t: "USDCHF,H4", c: "w-[52px] border-r border-[#bbb] pl-[6px] text-[#888]" },
    { t: "GBPUSD,H4", c: "w-[53px] pl-[6px] text-[#888]" },
    { t: "USDJPY,H4", c: "w-[48px] border-x border-b border-[#222] bg-white pl-[4px] text-[#222]" },
    { t: "XAUUSD,H1", c: "w-[52px] border-r border-[#bbb] pl-[6px] text-[#888]" },
    { t: "XAUUSD,H1", c: "w-[52px] border-r border-[#bbb] pl-[6px] text-[#888]" },
  ];
  const statusCells = ["w-[71px]", "w-[64px]", "w-[43px]", "w-[44px]", "w-[42px]", "w-[43px]", "w-[40px]"];
  return (
    <div className="relative flex h-[630px] w-[1037px] flex-col overflow-hidden bg-[#f0f0f0] text-[#444] blur-[0.4px] [font-family:'Liberation_Sans',sans-serif]">
      <div className="flex h-[11px] shrink-0 items-center gap-[2px] bg-[linear-gradient(90deg,#e6dcdc_0,#d8c8c8_130px,#8f3535_190px,#7c2a2a_420px,#8a3030_700px,#6e2626_1037px)] pl-[1px] text-[7.900px] leading-none text-[#333]">
        <S c="h-[8px] w-[8px]"><rect x="1" y="1" width="14" height="14" fill="#3e78b5"/><rect x="3" y="5" width="10" height="8" fill="#e6eff8"/></S>
        <span className="whitespace-nowrap">8654373: RoboForex-Demo - Demo Account</span>
      </div>
      <div className="flex h-[12px] shrink-0 items-center gap-[10px] border-b border-[#c4c4c4] bg-[#f5f5f5] pl-[1px] text-[7.600px] leading-none text-[#444]">
        {["File", "View", "Insert", "Charts", "Tools", "Window", "Help"].map((m) => (
          <span key={m}>{m}</span>
        ))}
      </div>
      <div className="flex h-[35px] shrink-0 flex-col border-b border-[#777] bg-[#f0f0f0]">
        <Toolbar1 />
        <Toolbar2 />
      </div>
      <div className="flex h-[466px] shrink-0">
        <Nav />
        <div className="flex min-w-0 flex-1 flex-col">
          <div className="h-[451px] overflow-hidden bg-[#7f8489] pl-[2px]">
            <div className="grid w-[910px] grid-cols-[459px_447px] grid-rows-[225px_224px] gap-x-[2px] gap-y-[2px]">
              <Win title="EURUSD,H4" cls="ml-[3px] pl-[6px] pr-[5px]" head="h-[18px] pt-[2px]">
                <Eur />
              </Win>
              <Win title="GBPUSD,H4" cls="pl-[5px] pr-[5px]" head="h-[18px] w-[426px] pl-[2px] pt-[2px]">
                <Gbp />
              </Win>
              <Win title="USDCHF,H4" cls="pl-[5px] pr-[5px]" head="h-[20.700px] pt-[4px]">
                <Chf />
              </Win>
              <Win title="USDJPY,H4" cls="pl-[5px] pr-[5px]" head="h-[20.700px] w-[426px] pl-[2px] pt-[4px]">
                <Jpy />
              </Win>
            </div>
          </div>
          <div className="relative flex h-[15px] shrink-0 items-start border-t border-[#555] bg-[#f0f0f0] pl-[4px] text-[7.200px] leading-none">
            {chartTabs.map((t, i) => (
              <div key={i} className={`flex h-[12px] shrink-0 items-center ${t.c}`}>
                {t.t}
              </div>
            ))}
            <div className="ml-auto mr-[6px] mt-[3px] flex gap-[7px] text-[6px] text-[#888]">
              <span>◂</span>
              <span>▸</span>
            </div>
          </div>
        </div>
      </div>
      <Terminal />
      <div className="h-[4px] shrink-0 border-b border-[#d8d8d8] bg-[#f0f0f0]" />
      <div className="flex h-[13px] shrink-0 items-center bg-[#f0f0f0] text-[7.200px] leading-none text-[#444]">
        <div className="-ml-[1px] w-[609px] border-r border-[#bbb] py-[2px]">Register a Virtual Server</div>
        <div className={`${statusCells[0]} border-r border-[#bbb] py-[2px] pl-[3px]`}>Default</div>
        {statusCells.slice(1).map((c, i) => (
          <div key={i} className={`${c} h-[11px] border-r border-[#bbb]`} />
        ))}
        <div className="ml-[4px] flex items-center gap-[2px]">
          <svg width="15" height="8" viewBox="0 0 15 8">
            {[0, 2, 4, 6, 8, 10, 12, 14].map((x, i) => (
              <rect key={x} x={x} y={i < 3 ? 3 : 0} width="1.200" height={i < 3 ? 5 : 8} fill={i % 2 ? "#2e7d9c" : "#6f9a2e"} />
            ))}
          </svg>
          <span>11/1 kb</span>
        </div>
      </div>
      <div className="h-[2px] shrink-0 bg-[#555]" />
      <Menu />
      <svg className="pointer-events-none absolute left-0 top-0" width="1037" height="630" viewBox="0 0 1037 630">
        <g fill="none" stroke="#f00000" strokeWidth="2">
          <rect x="33.500" y="113.500" width="94" height="13" />
          <rect x="122" y="228.500" width="149" height="19" />
          <path d="M37 128L9.500 232.500L118 237.500" />
        </g>
        <path d="M38 122l4 8-8-1z" fill="#f00000" />
        <path d="M124 237.500l-8-4v8z" fill="#f00000" />
      </svg>
    </div>
  );
}
